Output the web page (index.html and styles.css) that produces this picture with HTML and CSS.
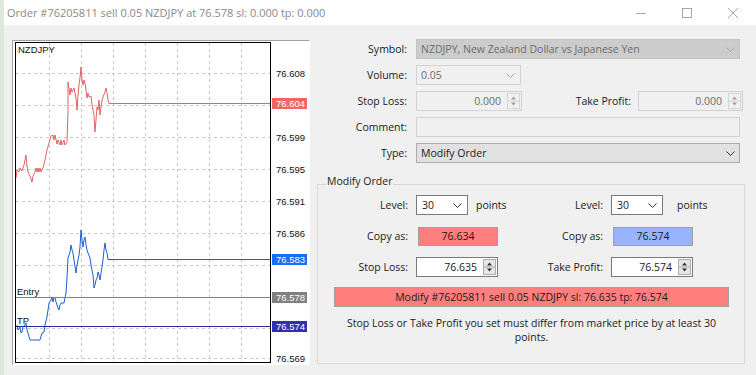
FILE: index.html
```html
<!DOCTYPE html>
<html lang="en">
<head>
  <meta charset="UTF-8" />
  <title>Order #76205811</title>
  <link rel="stylesheet" href="styles.css">
</head>
<body>

  <div class="window">
    <!-- Title bar -->
    <div class="titlebar">
      <span class="title">Order #76205811 sell 0.05 NZDJPY at 76.578 sl: 0.000 tp: 0.000</span>
      <div class="controls">
        <div class="ctl"><svg width="10" height="10"><line x1="0" y1="5.5" x2="10" y2="5.5"/></svg></div>
        <div class="ctl"><svg width="10" height="10"><rect x="0.5" y="0.5" width="9" height="9"/></svg></div>
        <div class="ctl"><svg width="10" height="10"><line x1="0" y1="0" x2="10" y2="10"/><line x1="10" y1="0" x2="0" y2="10"/></svg></div>
      </div>
    </div>

    <div class="content">
      <!-- Chart -->
      <div class="chart">
        <svg width="296" height="323" viewBox="13 41 296 323">
          <rect x="13" y="41" width="296" height="323" fill="#fff"/>
          <g class="grid">
            <line x1="49.5" y1="43" x2="49.5" y2="362"/>
            <line x1="81.5" y1="43" x2="81.5" y2="362"/>
            <line x1="113.5" y1="43" x2="113.5" y2="362"/>
            <line x1="145.5" y1="43" x2="145.5" y2="362"/>
            <line x1="177.5" y1="43" x2="177.5" y2="362"/>
            <line x1="209.5" y1="43" x2="209.5" y2="362"/>
            <line x1="241.5" y1="43" x2="241.5" y2="362"/>
            <line x1="16" y1="73.5" x2="270" y2="73.5"/>
            <line x1="16" y1="105.5" x2="270" y2="105.5"/>
            <line x1="16" y1="137.5" x2="270" y2="137.5"/>
            <line x1="16" y1="169.5" x2="270" y2="169.5"/>
            <line x1="16" y1="201.5" x2="270" y2="201.5"/>
            <line x1="16" y1="233.5" x2="270" y2="233.5"/>
            <line x1="16" y1="265.5" x2="270" y2="265.5"/>
            <line x1="16" y1="328.5" x2="270" y2="328.5"/>
            <line x1="16" y1="358.5" x2="270" y2="358.5"/>
          </g>

          <!-- ask line -->
          <polyline class="ask" points="16,178 17,170 19,172 20,168 22,171 24,165 26,155 27,166 28,172 30,176 32,182 33,176 35,172 36,168 37,172 38,168 39,172 40,168 41,172 43,168 45,160 47,150 49,143 51,136 53,135 54,140 55,135 57,144 58,140 60,145 61,140 62,145 64,140 65,145 67,142 68,112 68,82 70,95 71,88 72,92 74,88 76,98 77,110 78,95 79,85 80,78 81,67 82,80 83,85 84,80 85,83 86,90 87,98 88,93 89,97 91,96 92,105 94,115 95,132 96,120 97,107 98,110 99,100 100,115 101,107 102,100 103,97 105,92 106,88 107,93 108,100 109,103.5 270,103.5"/>
          <!-- bid line -->
          <polyline class="bid" points="17,325 18,330 20,327 21,333 22,332 23,326 24,327 26,323 27,330 28,333 30,340 40,340 42,333 44,332 45,325 47,317 49,303 51,300 52,297 53,302 54,297 55,298 56,302 57,305 58,308 59,310 60,305 61,303 64,303 65,298 66,293 67,278 68,258 70,252 71,245 72,250 73,253 74,260 76,273 77,265 78,260 79,255 80,247 81,230 82,240 83,247 84,240 85,237 86,245 87,250 88,253 90,258 91,265 93,275 94,288 95,285 96,280 97,278 98,272 99,275 100,280 101,273 102,267 103,260 104,250 105,243 106,250 107,253 108,259.5 270,259.5"/>

          <line x1="16" y1="297.5" x2="270" y2="297.5" stroke="#808080"/>
          <line x1="16" y1="326.5" x2="270" y2="326.5" stroke="#2a2a96"/>

          <rect class="frame" x="15.5" y="42.5" width="255" height="320"/>

          <text class="lbl" x="18" y="53">NZDJPY</text>
          <text class="lbl" x="17" y="295">Entry</text>
          <text class="lbl" x="17" y="324">TP</text>

          <g class="axis">
            <text x="276" y="77">76.608</text>
            <text x="276" y="141">76.599</text>
            <text x="276" y="173">76.595</text>
            <text x="276" y="205">76.591</text>
            <text x="276" y="237">76.586</text>
            <text x="276" y="362">76.569</text>
          </g>
          <rect x="272" y="98" width="35" height="11" fill="#f06666"/>
          <text class="tag" x="276" y="107">76.604</text>
          <rect x="272" y="254" width="35" height="11" fill="#1a6ef5"/>
          <text class="tag" x="276" y="263">76.583</text>
          <rect x="272" y="292" width="35" height="11" fill="#808080"/>
          <text class="tag" x="276" y="301">76.578</text>
          <rect x="272" y="321" width="35" height="11" fill="#3030b4"/>
          <text class="tag" x="276" y="330">76.574</text>
        </svg>
      </div>

      <!-- Order form -->
      <div class="form">
        <div class="row">
          <label>Symbol:</label>
          <div class="field combo off wide">NZDJPY, New Zealand Dollar vs Japanese Yen
            <svg class="chev" width="9" height="5"><polyline points="0.5,0.5 4.5,4.5 8.5,0.5"/></svg>
          </div>
        </div>
        <div class="row">
          <label>Volume:</label>
          <div class="field dim volume">0.05
            <svg class="chev" width="9" height="5"><polyline points="0.5,0.5 4.5,4.5 8.5,0.5"/></svg>
          </div>
        </div>
        <div class="row">
          <label>Stop Loss:</label>
          <div class="field dim price top">
            <span class="num">0.000</span>
            <svg class="spin" width="13" height="16"><rect x="0.5" y="0.5" width="12" height="15"/><line x1="1" y1="8" x2="12" y2="8"/><path d="M4 6.5 L6.5 3.5 L9 6.5Z"/><path d="M4 9.5 L6.5 12.5 L9 9.5Z"/></svg>
          </div>
          <label class="side">Take Profit:</label>
          <div class="field dim price tp-top">
            <span class="num">0.000</span>
            <svg class="spin" width="13" height="16"><rect x="0.5" y="0.5" width="12" height="15"/><line x1="1" y1="8" x2="12" y2="8"/><path d="M4 6.5 L6.5 3.5 L9 6.5Z"/><path d="M4 9.5 L6.5 12.5 L9 9.5Z"/></svg>
          </div>
        </div>
        <div class="row">
          <label>Comment:</label>
          <div class="field dim wide"></div>
        </div>
        <div class="row">
          <label>Type:</label>
          <div class="field combo type wide">Modify Order
            <svg class="chev" width="9" height="5"><polyline points="0.5,0.5 4.5,4.5 8.5,0.5"/></svg>
          </div>
        </div>

        <fieldset class="group">
          <legend>Modify Order</legend>
          <div class="levels">
            <label>Level:</label>
            <div class="cell">
              <div class="field combo level">30
                <svg class="chev" width="9" height="5"><polyline points="0.5,0.5 4.5,4.5 8.5,0.5"/></svg>
              </div>
              <span class="points">points</span>
            </div>
            <label>Level:</label>
            <div class="cell">
              <div class="field combo level">30
                <svg class="chev" width="9" height="5"><polyline points="0.5,0.5 4.5,4.5 8.5,0.5"/></svg>
              </div>
              <span class="points far">points</span>
            </div>

            <label>Copy as:</label>
            <div class="cell"><div class="copy sl">76.634</div></div>
            <label>Copy as:</label>
            <div class="cell"><div class="copy tp">76.574</div></div>

            <label>Stop Loss:</label>
            <div class="cell">
              <div class="field price live">
                <span class="num">76.635</span>
                <svg class="spin" width="13" height="16"><rect x="0.5" y="0.5" width="12" height="15"/><line x1="1" y1="8" x2="12" y2="8"/><path d="M4 6.5 L6.5 3.5 L9 6.5Z"/><path d="M4 9.5 L6.5 12.5 L9 9.5Z"/></svg>
              </div>
            </div>
            <label>Take Profit:</label>
            <div class="cell">
              <div class="field price live">
                <span class="num">76.574</span>
                <svg class="spin" width="13" height="16"><rect x="0.5" y="0.5" width="12" height="15"/><line x1="1" y1="8" x2="12" y2="8"/><path d="M4 6.5 L6.5 3.5 L9 6.5Z"/><path d="M4 9.5 L6.5 12.5 L9 9.5Z"/></svg>
              </div>
            </div>
          </div>

          <button class="modify">Modify #76205811 sell 0.05 NZDJPY sl: 76.635 tp: 76.574</button>
          <p class="note">Stop Loss or Take Profit you set must differ from market price by at least 30 points.</p>
        </fieldset>
      </div>
    </div>
  </div>

</body>
</html>
```

FILE: styles.css
```css
* {
  box-sizing: border-box;
}

body {
  margin: 0;
  background: #dfe7df;
  font-family: 'Segoe UI', 'Open Sans', sans-serif;
  font-size: 10.5px;
  color: #1a1a1a;
}

.window {
  margin-left: 4px;
  width: 752px;
  height: 375px;
  background: #f0f0f0;
  overflow: hidden;
}

/* Title bar */
.titlebar {
  height: 25px;
  background: #fff;
  display: flex;
  align-items: center;
  padding-left: 3px;
  font-size: 11px;
}

.title {
  color: #8a8a8a;
}

.controls {
  margin-left: auto;
  display: flex;
}

.ctl {
  width: 46px;
  height: 25px;
  display: flex;
  align-items: center;
  justify-content: center;
}

.ctl svg {
  stroke: #a8a8a8;
  fill: none;
}

/* Layout */
.content {
  display: flex;
  padding: 15px 0 0 8px;
}

.chart {
  width: 298px;
  height: 325px;
  border: 1px solid;
  border-color: #a0a0a0 #fff #fff #a0a0a0;
  background: #fff;
}

.chart svg {
  display: block;
  font-family: 'Liberation Sans', sans-serif;
  font-size: 9.5px;
}

.grid line {
  stroke: #c8c8c8;
  stroke-dasharray: 3 3;
}

.ask, .bid {
  fill: none;
  stroke-width: 1;
}

.ask {
  stroke: #e06464;
}

.bid {
  stroke: #1f5fd0;
}

.frame {
  fill: none;
  stroke: #000;
}

.lbl, .axis text {
  fill: #111;
}

.tag {
  fill: #fff;
}

/* Form */
.form {
  width: 428px;
  margin-left: 7px;
  margin-top: -1px;
}

.row {
  display: flex;
  align-items: center;
  height: 20px;
  margin-bottom: 6px;
}

.row > label {
  width: 90px;
  margin-right: 9px;
  text-align: right;
}

.row > label.side {
  width: auto;
  flex: 1;
  margin-right: 7px;
}

.field {
  height: 20px;
  border: 1px solid #ccc;
  background: #fff;
  display: flex;
  align-items: center;
  padding: 0 4px;
  white-space: nowrap;
}

.wide {
  width: 324px;
}

.chev {
  margin-left: auto;
  fill: none;
  stroke: #333;
}

.off {
  background: #ccc;
  border-color: #c4c4c4;
  color: #6d6d6d;
}

.off .chev,
.dim .chev {
  stroke: #a8a8a8;
}

.dim {
  background: #f0f0f0;
  border-color: #d2d2d2;
  color: #6d6d6d;
}

.volume {
  width: 105px;
  padding-right: 5px;
}

.type {
  background: #e1e1e1;
  border-color: #adadad;
}

.price {
  padding: 0 1px 0 4px;
}

.price .num {
  margin-left: auto;
  margin-right: 6px;
}

.price.top {
  width: 106px;
}

.price.tp-top {
  width: 105px;
  margin-right: 2px;
}

.spin rect {
  fill: #e6e6e6;
  stroke: #adadad;
}

.spin line {
  stroke: #adadad;
}

.spin path {
  fill: #333;
}

.dim .spin rect {
  fill: #f0f0f0;
  stroke: #d6d6d6;
}

.dim .spin line {
  stroke: #d6d6d6;
}

.dim .spin path {
  fill: #a0a0a0;
}

/* Modify Order group */
.group {
  margin: 11px 0 0;
  padding: 0 0 19px;
  border: 1px solid #d8d8d8;
  min-width: 0;
}

.group legend {
  margin-left: 8px;
  padding: 0 1px 6px;
  line-height: 14px;
}

.levels {
  display: grid;
  grid-template-columns: 90px 110px 69px auto;
  grid-auto-rows: 20px;
  column-gap: 8px;
  row-gap: 11px;
  align-items: center;
  margin-top: 1px;
}

.levels > label {
  text-align: right;
}

.cell {
  display: flex;
  align-items: center;
}

.level {
  width: 52px;
  border-color: #7a7a7a;
  padding: 0 5px;
}

.points {
  margin-left: 8px;
}

.points.far {
  margin-left: 14px;
}

.copy {
  margin-left: 2px;
  width: 80px;
  height: 19px;
  border: 1px solid #a0a0a0;
  text-align: center;
  line-height: 17px;
}

.copy.sl {
  background: #ff7f7f;
}

.copy.tp {
  background: #99b4ff;
}

.live {
  width: 82px;
  border-color: #7a7a7a;
}

.modify {
  display: block;
  margin: 10px 0 0 16px;
  width: 395px;
  height: 20px;
  padding: 0;
  background: #ff7f7f;
  border: 1px solid #a0a0a0;
  font: inherit;
  color: #1a1a1a;
}

.note {
  margin: 9px 0 0 16px;
  width: 395px;
  text-align: center;
  line-height: 14px;
}
```
